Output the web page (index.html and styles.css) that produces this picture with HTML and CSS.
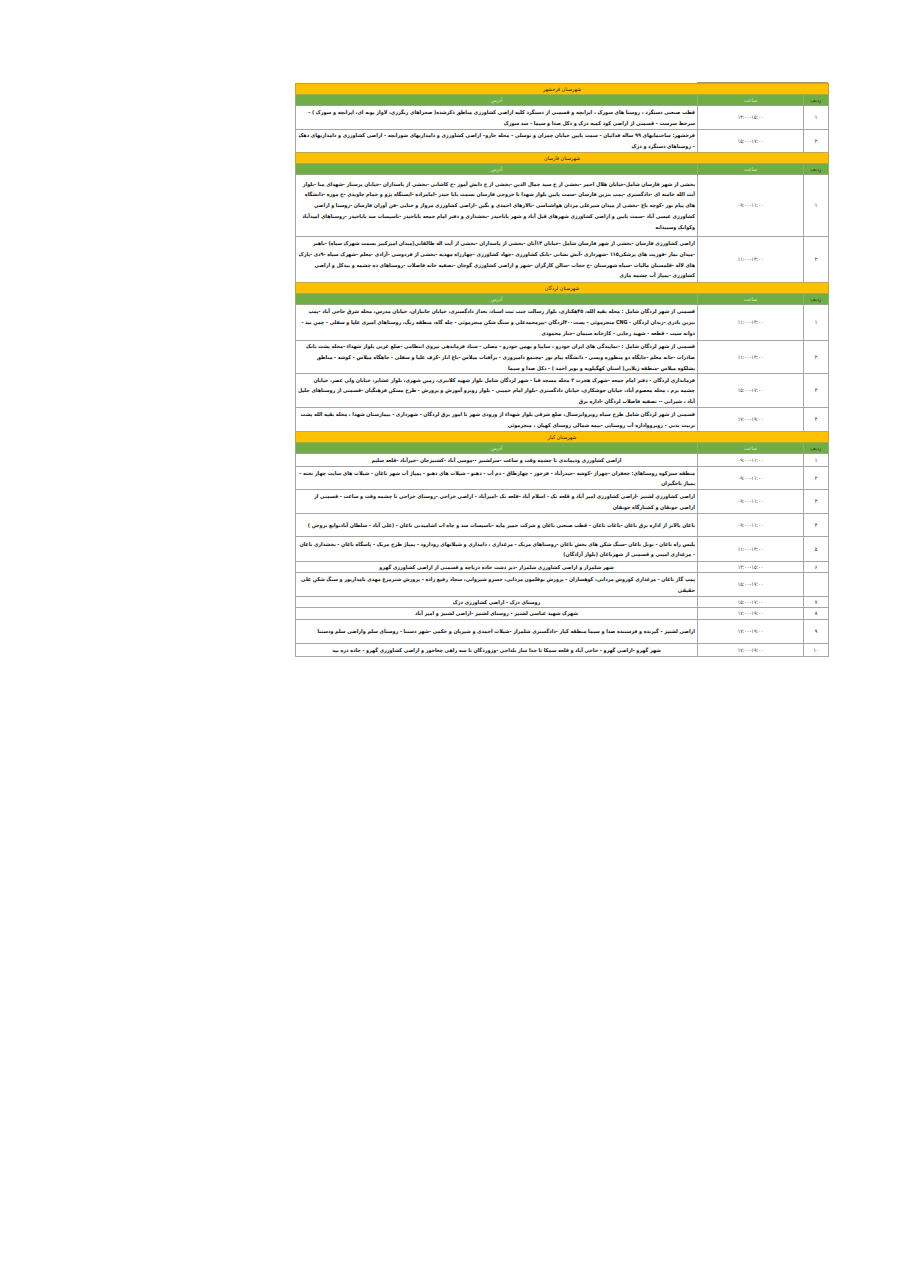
FILE: index.html
```html
<!DOCTYPE html>
<html lang="fa">
<head>
<meta charset="utf-8">
<title>جدول خاموشی</title>
<link rel="stylesheet" href="styles.css">
</head>
<body>
<div class="sheet">
  <div class="topline"></div>
  <table class="grid" dir="rtl">
    <colgroup>
      <col class="c-num">
      <col class="c-time">
      <col class="c-addr">
    </colgroup>
    <tbody>
      <tr class="city"><td colspan="3">شهرستان فرخشهر</td></tr>
      <tr class="head"><td class="hn">ردیف</td><td>ساعت</td><td>آدرس</td></tr>
      <tr class="h23"><td class="num">۱</td><td class="time">۱۲:۰۰-۱۵:۰۰</td><td class="addr">قطب صنعتی دستگرد ، روستا های سورک ، ایرانچه و  قسمتی از دستگرد کلیه اراضی  کشاورزی مناطق ذکرشده( صحراهای رنگرزی، لاواز پونه ای، ایرانچه و سورک ) - سرخط سرست  - قسمتی از اراضی کود کمبه دزک و دکل صدا و سیما - سد سورک</td></tr>
      <tr class="h22"><td class="num">۲</td><td class="time">۱۵:۰۰-۱۷:۰۰</td><td class="addr">فرخشهر: ساختمانهای ۹۹ ساله فدائیان - سمت پایین خیابان چمران و توسلی – محله خارو– اراضی کشاورزی و دامداریهای شورابچه  -  اراضی کشاورزی و دامداریهای دهک – روستاهای دستگرد و دزک</td></tr>

      <tr class="city"><td colspan="3">شهرستان فارسان</td></tr>
      <tr class="head"><td class="hn">ردیف</td><td>ساعت</td><td>آدرس</td></tr>
      <tr class="h61"><td class="num">۱</td><td class="time">۰۹:۰۰-۱۱:۰۰</td><td class="addr">بخشی از شهر فارسان شامل-خیابان هلال احمر -بخشی از خ سید جمال الدین -بخشی از خ دانش آموز -خ کاشانی -بخشی از پاسداران -خیابان پرستار -شهدای منا -بلوار آیت الله خامنه ای -دادگستری -پمپ بنزین فارسان -سمت پایین بلوار شهدا تا خروجی فارسان بسمت بابا حیدر -امامزاده -ایستگاه پژو و حمام جاویدی -خ موزه -دانشگاه های  پیام نور -کوچه باغ -بخشی از میدان شیرعلی مردان هواشناسی -تالارهای احمدی و نگین -اراضی کشاورزی مرواز و خنایی -فن آوران فارسان -روستا و اراضی کشاورزی عیسی آباد -سمت پایین و اراضی کشاورزی شهرهای قیل آباد و شهر باباحیدر -بخشداری و دفتر امام جمعه  باباحیدر -تاسیسات سد باباحیدر -روستاهای امیدآباد وکوانک وسیبدانه</td></tr>
      <tr class="h45"><td class="num">۲</td><td class="time">۱۱:۰۰-۱۳:۰۰</td><td class="addr">اراضی کشاورزی فارسان -بخشی از شهر فارسان شامل -خیابان ۱۳آبان -بخشی از پاسداران -بخشی از آیت اله طالقانی(میدان امیرکبیر بسمت شهرک سپاه) -باهنر -میدان نماز -فوریت های پزشکی۱۱۵ -شهرداری -آتش نشانی -بانک کشاورزی -جهاد کشاورزی -چهارراه مهدیه -بخشی از فردوسی -آزادی -معلم -شهرک سپاه -۹دی -پارک های لاله -قلمستان مالیات -سپاه شهرستان -خ حجاب -سالن کارگران -شهر و اراضی کشاورزی گوجان -تصفیه خانه فاضلاب -روستاهای ده  چشمه و بیدکل و اراضی کشاورزی -پمپاژ آب چشمه ماری</td></tr>

      <tr class="city"><td colspan="3">شهرستان لردگان</td></tr>
      <tr class="head"><td class="hn">ردیف</td><td>ساعت</td><td>آدرس</td></tr>
      <tr class="h35"><td class="num">۱</td><td class="time">۱۱:۰۰-۱۳:۰۰</td><td class="addr">قسمتی از شهر لردگان شامل : محله بقیه الله، ۴۵هکتاری، بلوار رسالت جنب ثبت اسناد، بعداز دادگستری، خیابان جانبازان، خیابان مدرس، محله شرق حاجی آباد -پمپ بنزین نادری -زندان لردگان - CNG منجرموئی - پست۴۰۰لردگان -پیرمحمدعلی و سنگ شکن منجرموئی - چله گاه، منطقه ریگ، روستاهای امیری علیا و سفلی  - چمن بید - دوانه سیب  - قطعه  - شهید رجایی  - کارخانه سیمان  -جنار محمودی</td></tr>
      <tr class="h32"><td class="num">۲</td><td class="time">۱۱:۰۰-۱۳:۰۰</td><td class="addr">قسمتی از شهر لردگان شامل : -نمایندگی های ایران خودرو ، سایپا و بهمن خودرو  - مصلی  - ستاد فرماندهی نیروی انتظامی -ضلع غربی بلوار شهداء -محله پشت  بانک صادرات -خانه معلم -جایگاه دو منظوره ویسی - دانشگاه پیام نور -مجتمع دامپروری - برآفتاب میلاس -باغ انار -کرف علیا و سفلی  - جاهگاه میلاس  - کوشه - مناطق بشلکوه میلاس -منطقه زیلایی( استان کهگیلویه و بویر احمد ) - دکل صدا و سیما</td></tr>
      <tr class="h33"><td class="num">۳</td><td class="time">۱۵:۰۰-۱۷:۰۰</td><td class="addr">فرمانداری لردگان - دفتر امام جمعه -شهرک هجرت ۲ محله مسجد قبا - شهر لردگان شامل بلوار شهید کلانتری، زمین شهری، بلوار عشایر، خیابان ولی عصر، خیابان چشمه برم ، محله معصوم آباد، خیابان جوشکاری، خیابان دادگستری  -بلوار امام خمینی - بلوار روبرو آموزش و پرورش - طرح  مسکن فرهنگیان -قسمتی از روستاهای جلیل آباد ، شیرانی  -- تصفیه فاضلاب لردگان -اداره برق</td></tr>
      <tr class="h23"><td class="num">۴</td><td class="time">۱۷:۰۰-۱۹:۰۰</td><td class="addr">قسمتی از شهر لردگان شامل طرح سپاه روبروابرسنال، ضلع شرقی بلوار شهداء از ورودی شهر تا امور برق لردگان - شهرداری -  بیمارستان شهدا ، محله بقیه الله پشت تربیت بدنی - روبروواداره آب روستایی -نیمه شمالی روستای کهیان ، منجرموئی</td></tr>

      <tr class="city"><td colspan="3">شهرستان کیار</td></tr>
      <tr class="head"><td class="hn">ردیف</td><td>ساعت</td><td>آدرس</td></tr>
      <tr class="h12"><td class="num">۱</td><td class="time">۰۹:۰۰-۱۱:۰۰</td><td class="addr mid">اراضی کشاورزی ودیماندی تا چشمه وقت و ساعت -سرلشتیز  --موسی آباد -کشتیزجان -خیرآباد -قلعه سلیم</td></tr>
      <tr class="h22"><td class="num">۲</td><td class="time">۰۹:۰۰-۱۱:۰۰</td><td class="addr">منطقه سبزکوه روستاهای: جعفران -چهراز -کوشه -حیدرآباد - فرخور - چهارطاق - دم آب - دهنو - شیلات های دهنو - پمپاژ آب شهر ناغان - شیلات های سایت چهار تخته - پمپاژ باجگیران</td></tr>
      <tr class="h23"><td class="num">۳</td><td class="time">۰۹:۰۰-۱۱:۰۰</td><td class="addr">اراضی کشاورزی لشتیز -اراضی کشاورزی امیر آباد و قلعه تک - اسلام آباد -قلعه تک -امیرآباد - اراضی خراجی -روستای خراجی تا چشمه وقت و ساعت - قسمتی از اراضی جونقان و کشتارگاه جونقان</td></tr>
      <tr class="h22"><td class="num">۴</td><td class="time">۰۹:۰۰-۱۱:۰۰</td><td class="addr">ناغان بالاتر از اداره برق ناغان -باغات ناغان - قطب صنعتی ناغان و شرکت خمیر مایه  -تاسیسات سد و  چاه اب اشامیدنی ناغان - (علی آباد  -  سلطان آبادتوابع بروجن )</td></tr>
      <tr class="h24"><td class="num">۵</td><td class="time">۱۱:۰۰-۱۳:۰۰</td><td class="addr">پلیس راه ناغان - تونل ناغان -سنگ شکن های بخش ناغان -روستاهای مریک  - مرغداری ، دامداری و شیلاتهای رودارود  - پمپاژ طرح مریک  - پاسگاه ناغان  - بخشداری ناغان  - مرغداری امینی  و قسمتی از شهرناغان (بلوار آزادگان)</td></tr>
      <tr class="h10"><td class="num">۶</td><td class="time">۱۳:۰۰-۱۵:۰۰</td><td class="addr mid">شهر شلمزار و اراضی کشاورزی شلمزار -دیز دشت جاده دریاچه  و قسمتی از اراضی کشاورزی گهرو</td></tr>
      <tr class="h23"><td class="num"></td><td class="time">۱۵:۰۰-۱۷:۰۰</td><td class="addr">پمپ گاز ناغان  - مرغداری کوروش مردانی، کوهساران  - پرورش بوقلمون مردانی، خسرو شیروانی، سجاد رفیع زاده  - پرورش شترمرغ مهدی نامدارپور و سنگ شکن علی حقیقی</td></tr>
      <tr class="h10"><td class="num">۷</td><td class="time">۱۵:۰۰-۱۷:۰۰</td><td class="addr mid">روستای دزک  - اراضی کشاورزی دزک</td></tr>
      <tr class="h11"><td class="num">۸</td><td class="time">۱۷:۰۰-۱۹:۰۰</td><td class="addr mid">شهرک شهید عباسی لشتیز  - روستای لشتیز -اراضی لشتیز و امیر آباد</td></tr>
      <tr class="h23"><td class="num">۹</td><td class="time">۱۷:۰۰-۱۹:۰۰</td><td class="addr">اراضی لشتیز - گیرنده و فرستنده صدا و سیما منطقه کیار -دادگستری شلمزار -شیلات احمدی و شیریان و حکمی -شهر دستنا - روستای سلم واراضی سلم  ودستنا</td></tr>
      <tr class="h12"><td class="num">۱۰</td><td class="time">۱۷:۰۰-۱۹:۰۰</td><td class="addr mid">شهر گهرو -اراضی گهرو - حاجی آباد و قلعه سمکا تا جدا ساز بلداجی -وزوردگان تا سه راهی چغاخور و اراضی کشاورزی گهرو  - جاده دره بید</td></tr>
    </tbody>
  </table>
</div>
</body>
</html>
```

FILE: styles.css
```css
html, body {
  margin: 0;
  padding: 0;
  background: #ffffff;
}

.sheet {
  width: 533px;
  margin: 82px 0 0 295px;
  display: flex;
  flex-direction: column;
}

.topline {
  align-self: flex-end;
  width: 131px;
  height: 1px;
  background: #9a9a9a;
}

.grid {
  width: 533px;
  border-collapse: collapse;
  table-layout: fixed;
  font-family: "DejaVu Sans Condensed", "DejaVu Sans", sans-serif;
  font-size: 5.35px;
  line-height: 10.8px;
  color: #111111;
}

.c-num { width: 25px; }
.c-time { width: 106px; }
.c-addr { width: 402px; }

.grid td {
  border: 1px solid #a6a6a6;
  padding: 0 2px;
  vertical-align: middle;
}

.city td {
  background: #ffc000;
  text-align: center;
  height: 10px;
  line-height: 9px;
  border-color: #c9a227;
  color: #1a1a1a;
}

.head td {
  background: #70ad47;
  text-align: center;
  height: 10px;
  line-height: 9px;
  color: #d9e8cf;
  border-color: #8db070;
}

.head td.hn {
  color: #1f3311;
}

.num {
  text-align: center;
}

.time {
  text-align: center;
  color: #333333;
}

.addr {
  text-align: right;
  font-weight: bold;
}

.addr.mid {
  text-align: center;
}

.h10 td, .h11 td, .h12 td { line-height: 9px; }
.h10 td { height: 10px; }
.h11 td { height: 11px; }
.h12 td { height: 12px; }
.h22 td { height: 22px; }
.h23 td { height: 23px; }
.h24 td { height: 24px; }
.h32 td { height: 32px; }
.h33 td { height: 33px; }
.h35 td { height: 35px; }
.h45 td { height: 45px; }
.h61 td { height: 61px; }
```
